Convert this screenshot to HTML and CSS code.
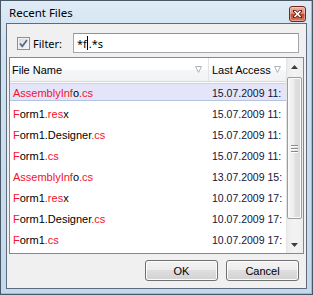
FILE: index.html
```html
<!DOCTYPE html>
<html lang="en">
<head>
    <meta charset="UTF-8">
    <meta name="viewport" content="width=device-width, initial-scale=1.0">
    <title>Recent Files</title>
    <link rel="stylesheet" href="styles.css">
</head>
<body>
    <div class="window">
        <div class="titlebar">
            <span class="title">Recent Files</span>
            <span class="close">
                <svg width="9" height="8" viewBox="0 0 9 8">
                    <path d="M1.5 1 L7.5 7 M7.5 1 L1.5 7" stroke="#5a2418" stroke-width="3.2" stroke-linecap="square"/>
                    <path d="M1.5 1 L7.5 7 M7.5 1 L1.5 7" stroke="#fff" stroke-width="1.7"/>
                </svg>
            </span>
        </div>
        <div class="client">
            <div class="filter-row">
                <label class="filter-check">
                    <span class="checkbox">
                        <svg width="11" height="11" viewBox="0 0 11 11">
                            <path d="M2 5.5 L4.3 8.3 L9 2" fill="none" stroke="#56678a" stroke-width="1.7"/>
                        </svg>
                    </span>
                    Filter:
                </label>
                <div class="filter-input">*f<span class="caret"></span>.*s</div>
            </div>
            <div class="list">
                <div class="list-body">
                    <div class="list-head">
                        <div class="head-cell col-name">
                            <span>File Name</span>
                            <svg width="7" height="7" viewBox="0 0 7 7"><path d="M0.5 0.5 H6.5 L3.5 6.5 Z" fill="none" stroke="#b4b4b4"/></svg>
                        </div>
                        <div class="head-cell col-date">
                            <span>Last Access</span>
                            <svg width="7" height="7" viewBox="0 0 7 7"><path d="M0.5 0.5 H6.5 L3.5 6.5 Z" fill="none" stroke="#b4b4b4"/></svg>
                        </div>
                    </div>
                    <div class="row selected">
                        <div class="col-name"><span class="red">AssemblyInf</span>o<span class="red">.cs</span></div>
                        <div class="col-date">15.07.2009 11:</div>
                    </div>
                    <div class="row">
                        <div class="col-name"><span class="red">F</span>orm1<span class="red">.res</span>x</div>
                        <div class="col-date">15.07.2009 11:</div>
                    </div>
                    <div class="row">
                        <div class="col-name"><span class="red">F</span>orm1.Designer<span class="red">.cs</span></div>
                        <div class="col-date">15.07.2009 11:</div>
                    </div>
                    <div class="row">
                        <div class="col-name"><span class="red">F</span>orm1<span class="red">.cs</span></div>
                        <div class="col-date">15.07.2009 11:</div>
                    </div>
                    <div class="row">
                        <div class="col-name"><span class="red">AssemblyInf</span>o<span class="red">.cs</span></div>
                        <div class="col-date">13.07.2009 15:</div>
                    </div>
                    <div class="row">
                        <div class="col-name"><span class="red">F</span>orm1<span class="red">.res</span>x</div>
                        <div class="col-date">10.07.2009 17:</div>
                    </div>
                    <div class="row">
                        <div class="col-name"><span class="red">F</span>orm1.Designer<span class="red">.cs</span></div>
                        <div class="col-date">10.07.2009 17:</div>
                    </div>
                    <div class="row">
                        <div class="col-name"><span class="red">F</span>orm1<span class="red">.cs</span></div>
                        <div class="col-date">10.07.2009 17:</div>
                    </div>
                </div>
                <div class="scrollbar">
                    <div class="sb-arrow">
                        <svg width="7" height="4" viewBox="0 0 7 4"><path d="M0 4 L3.5 0 L7 4 Z" fill="#3c3c3c"/></svg>
                    </div>
                    <div class="sb-track">
                        <div class="sb-thumb">
                            <span class="grip"></span>
                            <span class="grip"></span>
                            <span class="grip"></span>
                        </div>
                    </div>
                    <div class="sb-arrow">
                        <svg width="7" height="4" viewBox="0 0 7 4"><path d="M0 0 L7 0 L3.5 4 Z" fill="#3c3c3c"/></svg>
                    </div>
                </div>
            </div>
            <div class="buttons">
                <button class="btn">OK</button>
                <button class="btn">Cancel</button>
            </div>
        </div>
    </div>
</body>
</html>
```

FILE: styles.css
```css
* {
    box-sizing: border-box;
}
html, body {
    margin: 0;
}
body {
    width: 313px;
    height: 295px;
    overflow: hidden;
    font-family: "Liberation Sans", Arial, sans-serif;
    font-size: 10.5px;
    color: #000;
}
.window {
    width: 313px;
    height: 295px;
    display: flex;
    flex-direction: column;
    border: 1px solid #4a5866;
    background: linear-gradient(to bottom, #dfebf6 0, #d0e2f2 40px, #c3d9ee 100%);
    box-shadow: inset -1px -1px 0 #6ccff0;
}
.titlebar {
    height: 22px;
    display: flex;
    align-items: center;
    padding: 1px 6px 0 8px;
}
.title {
    flex: 1;
    font-family: "Noto Sans", sans-serif;
    font-size: 11.5px;
}
.close {
    align-self: flex-start;
    margin-top: 4px;
    width: 17px;
    height: 16px;
    display: flex;
    align-items: center;
    justify-content: center;
    border: 1px solid #6a2a1f;
    border-radius: 3px;
    background: linear-gradient(to bottom, #eeb1a2 0, #e08670 50%, #cc3f25 50%, #dc7a60 100%);
    box-shadow: inset 0 0 0 1px rgba(255, 255, 255, 0.35);
}
.client {
    flex: 1;
    margin: 0 5px 5px;
    border: 1px solid #5f6b78;
    background: #f0f0f0;
    display: flex;
    flex-direction: column;
}
.filter-row {
    display: flex;
    align-items: center;
    padding: 9px 7px 0 10px;
    margin-bottom: 4px;
}
.filter-check {
    width: 56px;
    display: flex;
    align-items: center;
    gap: 3px;
    font-family: "Noto Sans", sans-serif;
    font-size: 11px;
}
.checkbox {
    width: 13px;
    height: 13px;
    border: 1px solid #8e8f8f;
    background: linear-gradient(135deg, #d6d8dc, #f8f8f8);
    box-shadow: inset 0 0 0 1px #f2f2f2;
    display: flex;
}
.filter-input {
    flex: 1;
    height: 20px;
    border: 1px solid #a3a6ac;
    border-top-color: #8e9197;
    background: #fff;
    padding: 0 3px;
    display: flex;
    align-items: center;
    font-family: "Noto Sans", sans-serif;
    font-size: 11px;
}
.caret {
    width: 1px;
    height: 14px;
    background: #000;
    margin: 0 1px 0 0;
}
.list {
    margin: 0 2px;
    height: 197px;
    border: 1px solid #828790;
    background: #fff;
    display: flex;
}
.list-body {
    flex: 1;
}
.list-head {
    height: 24px;
    display: flex;
    border-bottom: 1px solid #d8d8d8;
    background: linear-gradient(to bottom, #fff 0, #fff 50%, #f6f7f9 50%, #f1f2f4 100%);
    font-size: 11px;
}
.head-cell {
    display: flex;
    align-items: center;
    justify-content: space-between;
}
.list-head .col-name {
    width: 199px;
    padding: 0 6px 0 2px;
    border-right: 1px solid #e2e4e8;
}
.list-head .col-date {
    width: 77px;
    padding: 0 5px 0 3px;
}
.row {
    height: 21px;
    display: flex;
    align-items: center;
}
.row .col-name {
    width: 199px;
    padding-left: 3px;
    font-size: 11px;
}
.row .col-date {
    width: 77px;
    padding-left: 3px;
    color: #14143a;
    white-space: nowrap;
    overflow: hidden;
}
.row.selected {
    background: #e4e5f8;
    box-shadow: inset 0 1px 0 #fff, inset 0 2px 0 #c5d2ec, inset 0 -2px 0 #fff, inset 0 -3px 0 #b2c3e4;
}
.red {
    color: #f5102e;
}
.scrollbar {
    width: 17px;
    display: flex;
    flex-direction: column;
    background: linear-gradient(to right, #e2e2e2 0, #eeeeee 2px, #f3f3f3 50%, #eeeeee 100%);
}
.sb-arrow {
    height: 17px;
    display: flex;
    align-items: center;
    justify-content: center;
}
.sb-track {
    flex: 1;
    padding: 2px 1px 0;
}
.sb-thumb {
    height: 142px;
    border: 1px solid #9c9c9c;
    border-radius: 2px;
    background: linear-gradient(to right, #f6f6f6 0, #ececec 45%, #dfdfdf 55%, #d9d9d9 100%);
    box-shadow: inset 0 0 0 1px #fbfbfb;
    display: flex;
    flex-direction: column;
    align-items: center;
    justify-content: center;
    gap: 2px;
}
.grip {
    width: 7px;
    height: 1px;
    background: #8a8a8a;
    box-shadow: 0 1px 0 #fff;
}
.buttons {
    display: flex;
    justify-content: flex-end;
    gap: 8px;
    padding: 6px 7px 0 0;
}
.btn {
    width: 73px;
    height: 21px;
    margin: 0;
    padding: 0;
    border: 1px solid #707070;
    border-radius: 3px;
    background: linear-gradient(to bottom, #f3f3f3 0, #ececec 50%, #dedede 50%, #d2d2d2 100%);
    box-shadow: inset 0 0 0 1px #fcfcfc;
    font-family: "Liberation Sans", Arial, sans-serif;
    font-size: 11px;
    color: #000;
}
```
